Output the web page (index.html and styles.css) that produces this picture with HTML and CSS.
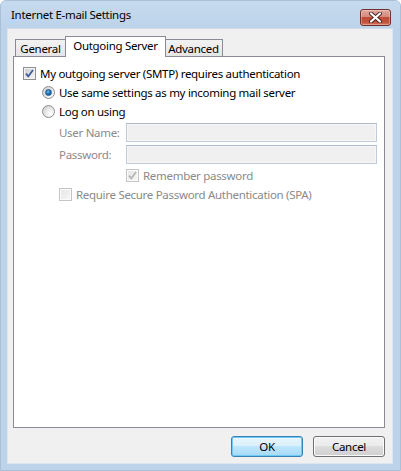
FILE: index.html
```html
<!DOCTYPE html>
<html>
<head>
<meta charset="utf-8">
<link rel="stylesheet" href="styles.css">
</head>
<body>
<div class="window">
  <div class="titlebar">
    <span class="title">Internet E-mail Settings</span>
    <button class="close" aria-label="Close">
      <svg width="15" height="11" viewBox="0 0 15 11">
        <path d="M3 1.5 L12 9.5 M12 1.5 L3 9.5" stroke="#4a2420" stroke-width="4" stroke-linecap="round"/>
        <path d="M3 1.5 L12 9.5 M12 1.5 L3 9.5" stroke="#ffffff" stroke-width="2.2" stroke-linecap="round"/>
      </svg>
    </button>
  </div>
  <div class="client">
    <div class="tabs">
      <div class="tab tab-general">General</div>
      <div class="tab tab-selected">Outgoing Server</div>
      <div class="tab tab-advanced">Advanced</div>
    </div>
    <div class="panel">
      <div class="row row-first">
        <span class="cb cb-checked">
          <svg width="9" height="9" viewBox="0 0 9 9"><path d="M1 4.6 L3.3 7.3 L8 1" fill="none" stroke="#3d5a99" stroke-width="1.7"/></svg>
        </span>
        <span class="lbl">My outgoing server (SMTP) requires authentication</span>
      </div>
      <div class="row indent1">
        <span class="radio radio-on"><span class="dot"></span></span>
        <span class="lbl">Use same settings as my incoming mail server</span>
      </div>
      <div class="row indent1">
        <span class="radio"></span>
        <span class="lbl">Log on using</span>
      </div>
      <div class="field indent2 field-first">
        <span class="flabel">User Name:</span>
        <span class="input"></span>
      </div>
      <div class="field indent2 field-second">
        <span class="flabel">Password:</span>
        <span class="input"></span>
      </div>
      <div class="row indent3 row-remember">
        <span class="cb cb-disabled">
          <svg width="9" height="9" viewBox="0 0 9 9"><path d="M1 4.6 L3.3 7.3 L8 1" fill="none" stroke="#b4b4b4" stroke-width="1.7"/></svg>
        </span>
        <span class="lbl disabled">Remember password</span>
      </div>
      <div class="row indent2">
        <span class="cb cb-disabled"></span>
        <span class="lbl disabled">Require Secure Password Authentication (SPA)</span>
      </div>
    </div>
    <div class="buttons">
      <button class="btn btn-default">OK</button>
      <button class="btn">Cancel</button>
    </div>
  </div>
</div>
</body>
</html>
```

FILE: styles.css
```css
* { box-sizing: border-box; }
html, body {
  margin: 0;
  padding: 0;
  background: #ffffff;
}
body {
  font-family: "Noto Sans", "Open Sans", sans-serif;
  font-size: 11.5px;
  letter-spacing: -0.3px;
  color: #000;
}
.window {
  width: 401px;
  height: 471px;
  background: #bcd3ea;
  border: 1px solid #a9c0d8;
  border-radius: 6px 6px 0 0;
  display: flex;
  flex-direction: column;
  overflow: hidden;
}
.titlebar {
  height: 27px;
  flex: none;
  display: flex;
  align-items: flex-start;
  justify-content: space-between;
  background: linear-gradient(#c6daee, #bcd3ea);
  padding: 0 9px 0 10px;
}
.title {
  margin-top: 6px;
  font-size: 11.5px;
  line-height: 16px;
  color: #000;
}
.close {
  margin-top: 8px;
  width: 31px;
  height: 17px;
  padding: 0;
  border: 1px solid #6e302a;
  border-radius: 3px;
  background: linear-gradient(#e3a79d 0%, #d48a7d 45%, #c24b37 50%, #c3503b 80%, #d57862 100%);
  box-shadow: inset 0 0 0 1px rgba(255,255,255,0.3);
  display: flex;
  align-items: center;
  justify-content: center;
}
.client {
  flex: 1;
  margin: 0 7px 6px 6px;
  background: #f0f0f0;
  border: 1px solid #dbe6f2;
  border-top-color: #d0dceb;
  display: flex;
  flex-direction: column;
  padding: 7px 8px 0 5px;
}
.tabs {
  display: flex;
  align-items: flex-end;
  height: 21px;
  margin-bottom: -1px;
  padding-left: 2px;
  position: relative;
  z-index: 1;
}
.tab {
  height: 17px;
  border: 1px solid #898c95;
  border-bottom: none;
  background: linear-gradient(#f2f2f2, #e5e5e5);
  text-align: center;
  line-height: 15px;
  margin-bottom: 1px;
  padding-top: 1px;
}
.tab-general { width: 51px; }
.tab-selected {
  width: 101px;
  height: 21px;
  margin: 0 -1px 0 -1px;
  background: #ffffff;
  padding-top: 0;
  line-height: 17px;
  position: relative;
  z-index: 2;
}
.tab-advanced { width: 58px; border-left: none; }
.panel {
  width: 372px;
  height: 372px;
  background: #ffffff;
  border: 1px solid #898c95;
  padding: 7px 0 0 9px;
}
.row {
  height: 19px;
  display: flex;
  align-items: center;
}
.indent1 { padding-left: 19px; }
.indent2 { padding-left: 36px; }
.indent3 { padding-left: 103px; }
.lbl {
  margin-left: 4px;
  white-space: nowrap;
  line-height: 16px;
}
.disabled, .flabel { color: #8a8a8a; }
.cb {
  width: 13px;
  height: 13px;
  flex: none;
  border: 1px solid #8e8f8f;
  background: linear-gradient(135deg, #c9ccd1 0%, #eaeaeb 70%, #f5f5f5 100%);
  box-shadow: inset 0 0 0 1px #f4f4f4;
  display: flex;
  align-items: center;
  justify-content: center;
}
.cb-disabled {
  border-color: #c5c5c5;
  background: linear-gradient(135deg, #e6e6e6, #f6f6f6);
  box-shadow: inset 0 0 0 1px #fafafa;
}
.radio {
  width: 13px;
  height: 13px;
  flex: none;
  border-radius: 50%;
  border: 1px solid #8e8f8f;
  background: radial-gradient(circle at 70% 70%, #ffffff 0%, #e6e6e6 50%, #c6c8cc 100%);
  display: flex;
  align-items: center;
  justify-content: center;
}
.dot {
  width: 7px;
  height: 7px;
  border-radius: 50%;
  background: radial-gradient(circle at 40% 35%, #7cc0ec 0%, #1f73b8 45%, #0b4782 100%);
  border: 1px solid #1c5a93;
}
.field {
  display: flex;
  align-items: center;
  height: 19px;
}
.field-first { margin-top: 2px; }
.field-second { margin-top: 3px; }
.flabel {
  width: 67px;
  flex: none;
  white-space: nowrap;
}
.input {
  width: 251px;
  height: 19px;
  border: 1px solid #c0ccd9;
  border-top-color: #abbccd;
  background: #f0f0f0;
  box-shadow: inset 0 0 0 1px #f6f6f6;
}
.row-remember { margin-top: 2px; }
.buttons {
  display: flex;
  justify-content: flex-end;
  gap: 10px;
  padding-top: 8px;
  margin-right: -1px;
}
.btn {
  width: 72px;
  height: 21px;
  padding: 0;
  font-family: "Noto Sans", "Open Sans", sans-serif;
  font-size: 11.5px;
  letter-spacing: -0.3px;
  color: #000;
  border: 1px solid #707070;
  border-radius: 3px;
  background: linear-gradient(#f2f2f2 0%, #ebebeb 49%, #dddddd 50%, #cfcfcf 100%);
  box-shadow: inset 0 0 0 1px #fbfbfb;
}
.btn-default {
  border-color: #3c7fb1;
  background: linear-gradient(#eaf6fd 0%, #d9f0fc 49%, #bee6fd 50%, #a7d9f5 100%);
  box-shadow: inset 0 0 0 1px #6ecbf8;
}
```
